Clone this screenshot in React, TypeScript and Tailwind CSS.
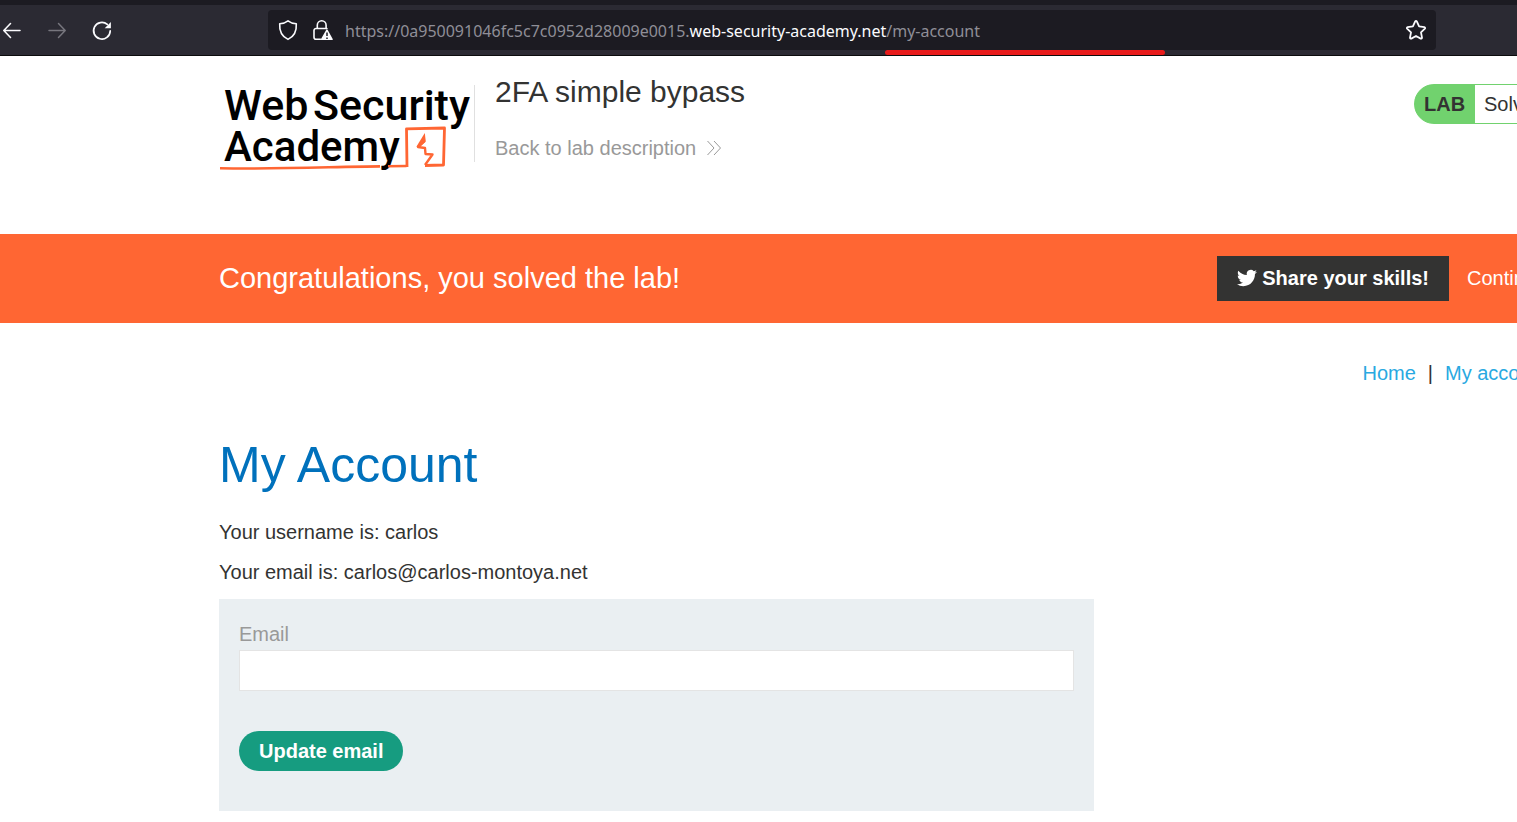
import type { ReactNode } from "react";

function BrowserButton({ label, children }: { label: string; children: ReactNode }) {
  return (
    <button type="button" aria-label={label} className="flex size-6 shrink-0 items-center justify-center">
      {children}
    </button>
  );
}

function BrowserBar() {
  return (
    <div className="relative h-14 border-t-[5px] border-b border-t-[#1c1b22] border-b-[#0c0c0d] bg-[#2b2a33] text-[#fbfbfe]">
      <div className="flex h-[50px] items-center">
        <nav aria-label="Browser" className="flex gap-[21px]">
          <BrowserButton label="Back">
            <svg viewBox="0 0 24 24" className="size-6" fill="none" stroke="currentColor" strokeWidth="1.6" strokeLinecap="round" strokeLinejoin="round">
              <path d="M20 12.500H4M10.500 5.500 3.800 12.500l6.700 7" />
            </svg>
          </BrowserButton>
          <BrowserButton label="Forward">
            <svg viewBox="0 0 24 24" className="size-6 text-[#77767e]" fill="none" stroke="currentColor" strokeWidth="1.500" strokeLinecap="round" strokeLinejoin="round">
              <path d="M4 12.500h16M13.500 5.500l6.700 7-6.700 7" />
            </svg>
          </BrowserButton>
          <BrowserButton label="Reload">
            <svg viewBox="0 0 24 24" className="size-6">
              <path d="M20.200 12.900A8.300 8.300 0 1 1 17.300 6.400" fill="none" stroke="currentColor" strokeWidth="1.700" strokeLinecap="round" />
              <path d="M20.900 4v6.200h-6.200z" fill="currentColor" />
            </svg>
          </BrowserButton>
        </nav>
        <div className="ml-[154px] mr-[81px] flex h-10 min-w-0 grow items-center rounded bg-[#1c1b22] pl-2 pr-2">
          <svg viewBox="0 0 24 24" className="size-6 shrink-0" fill="none" stroke="currentColor" strokeWidth="1.600" strokeLinejoin="round">
            <path d="M12 2.800C9.700 4.600 6.700 5.500 3.700 5.700c-.4 6.300 1.600 12.500 8.300 15.700 6.700-3.200 8.700-9.400 8.300-15.700C17.300 5.500 14.300 4.600 12 2.800z" />
          </svg>
          <svg viewBox="0 0 24 24" className="ml-[10px] size-6 shrink-0">
            <path d="M7.300 11V7.200a4.400 4.400 0 0 1 8.800 0V11" fill="none" stroke="currentColor" strokeWidth="1.600" />
            <path d="M10.500 21.200H6a2 2 0 0 1-2-2v-6.700a2 2 0 0 1 2-2h10.900" fill="none" stroke="currentColor" strokeWidth="1.600" strokeLinecap="round" />
            <path d="M16.300 11.800 11 20.900a.8.8 0 0 0 .7 1.200h10.300a.8.8 0 0 0 .7-1.200L17.600 11.800a.8.8 0 0 0-1.300 0z" fill="currentColor" />
            <path d="M17 14.500v3.600M17 19.400v1.500" stroke="#1c1b22" strokeWidth="1.500" />
          </svg>
          <p className="ml-[11px] grow truncate pt-[2px] font-['Noto_Sans','Open_Sans',sans-serif] text-[16px] leading-6 text-[#8f8e97]">
            https://0a950091046fc5c7c0952d28009e0015.<span className="text-[#fbfbfe]">web-security-academy.net</span>/my-account
          </p>
          <BrowserButton label="Bookmark this page">
            <svg viewBox="0 0 24 24" className="size-6" fill="none" stroke="currentColor" strokeWidth="1.800" strokeLinejoin="round">
              <path d="M11.200 3.400a.9.900 0 0 1 1.600 0l2.300 5 5.300.7a.9.900 0 0 1 .5 1.500l-3.900 3.700 1 5.400a.9.900 0 0 1-1.300.9L12 18l-4.700 2.600a.9.900 0 0 1-1.300-.9l1-5.400-3.900-3.700a.9.900 0 0 1 .5-1.500l5.300-.7z" />
            </svg>
          </BrowserButton>
        </div>
      </div>
      <div className="absolute left-[885px] top-[45px] h-[5px] w-[280px] rounded-full bg-[#e81b1b]" />
    </div>
  );
}

function Logo() {
  return (
    <svg viewBox="0 0 250 94" role="img" aria-label="Web Security Academy" className="h-[94px] w-[250px] shrink-0 overflow-visible">
      <g className="font-[Roboto,sans-serif] text-[43px] font-medium" fill="#000">
        <text x="5" y="42">Web</text>
        <text x="94" y="42">Security</text>
        <text x="5" y="83" className="text-[42px]">Academy</text>
      </g>
      <g fill="none" stroke="#ff6633" strokeLinejoin="round">
        <path d="M1 90.200C60 91.500 120 88.500 161 88.400M169 88.300 187.500 88" strokeWidth="2.600" />
        <path d="M188 89 187.500 50.800 225.500 50 224.500 87 206 87.500" strokeWidth="2.800" />
        <path d="M205.500 63 199 69 206 70 206.500 76 213.500 76.500 206 87" strokeWidth="2.400" />
      </g>
      <path d="M205.800 55 197.500 68.500 199.500 70 206.800 63.500z" fill="#ff6633" />
    </svg>
  );
}

function LabHeader() {
  return (
    <header className="flex h-[178px] items-start pl-[219px]">
      <a href="#academy" className="mt-[22px]">
        <Logo />
      </a>
      <div className="ml-[5px] mt-[29px] h-[77px] w-px bg-[#e0e0e0]" />
      <div className="ml-5 mt-4 grow">
        <h2 className="text-[30px] leading-10">2FA simple bypass</h2>
        <a href="#description" className="mt-6 flex items-center gap-[10px] leading-6 text-[#999]">
          Back to lab description
          <svg viewBox="0 0 16 16" className="size-4" fill="none" stroke="currentColor" strokeWidth="1">
            <path d="M1.500 1 8 8l-6.500 7M8 1l6.500 7L8 15" />
          </svg>
        </a>
      </div>
      <div className="mt-7 w-[103px] shrink-0 overflow-hidden">
        <div className="flex h-10 w-max items-stretch overflow-hidden rounded-full border border-[#71d26e] bg-[linear-gradient(to_right,#71d26e_50px,white_50px)] leading-[38px]">
          <span className="w-15 bg-[#71d26e] pl-[9px] font-bold">LAB</span>
          <span className="px-[9px]">Solved</span>
        </div>
      </div>
    </header>
  );
}

function SolvedBanner() {
  return (
    <section className="flex h-[89px] items-center bg-[#ff6633] pl-[219px] text-white">
      <p className="grow pb-[2px] text-[29px] leading-10">Congratulations, you solved the lab!</p>
      <a href="#share" className="flex h-[45px] shrink-0 items-center gap-[5px] bg-[#333332] px-5 pb-[2px] font-bold">
        <svg viewBox="0 0 24 24" className="size-5" fill="currentColor">
          <path d="M23.950 4.570a10 10 0 0 1-2.820.77 4.960 4.960 0 0 0 2.160-2.720c-.95.55-2 .95-3.130 1.180a4.920 4.920 0 0 0-8.380 4.480C7.690 8.090 4.070 6.130 1.640 3.160a4.820 4.820 0 0 0-.67 2.480c0 1.710.87 3.210 2.190 4.100a4.900 4.900 0 0 1-2.230-.62v.06a4.920 4.920 0 0 0 3.950 4.830 5 5 0 0 1-2.210.08 4.940 4.940 0 0 0 4.600 3.420A9.870 9.870 0 0 1 0 19.540a14 14 0 0 0 7.550 2.210c9.050 0 14-7.500 14-13.980 0-.21 0-.42-.02-.63a9.940 9.940 0 0 0 2.460-2.550z" />
        </svg>
        Share your skills!
      </a>
      <a href="#learning" className="ml-[18px] w-[50px] shrink-0 overflow-hidden whitespace-nowrap pb-[2px]">
        Continue learning
      </a>
    </section>
  );
}

function AccountForm() {
  return (
    <form className="h-[212px] w-[875px] max-w-full bg-[#eaeff2] p-5" onSubmit={(e) => e.preventDefault()}>
      <label htmlFor="email" className="block h-[31px] leading-[30px] text-[#999]">
        Email
      </label>
      <input id="email" type="email" className="block h-[41px] w-full border border-[#e4e4e4] bg-white px-2 outline-none" />
      <button type="submit" className="mt-10 h-10 rounded-full bg-[#169c80] px-5 font-bold text-white">
        Update email
      </button>
    </form>
  );
}

export default function App() {
  return (
    <div className="min-h-screen overflow-hidden bg-white font-['Liberation_Sans',Arial,sans-serif] text-[20px] text-[#333332]">
      <BrowserBar />
      <LabHeader />
      <SolvedBanner />
      <main className="pl-[219px]">
        <nav aria-label="Account" className="flex h-[100px] items-center justify-end text-[#29a9e1]">
          <a href="#home">Home</a>
          <span className="mx-3 text-[#333332]">|</span>
          <a href="#account" className="w-[72px] overflow-hidden whitespace-nowrap">
            My account
          </a>
        </nav>
        <h1 className="mt-3 text-[50px] leading-[60px] text-[#0071bc]">My Account</h1>
        <p className="mt-[22px] leading-[30px]">Your username is: carlos</p>
        <p className="mt-[10px] mb-3 leading-[30px]">Your email is: carlos@carlos-montoya.net</p>
        <AccountForm />
      </main>
    </div>
  );
}
